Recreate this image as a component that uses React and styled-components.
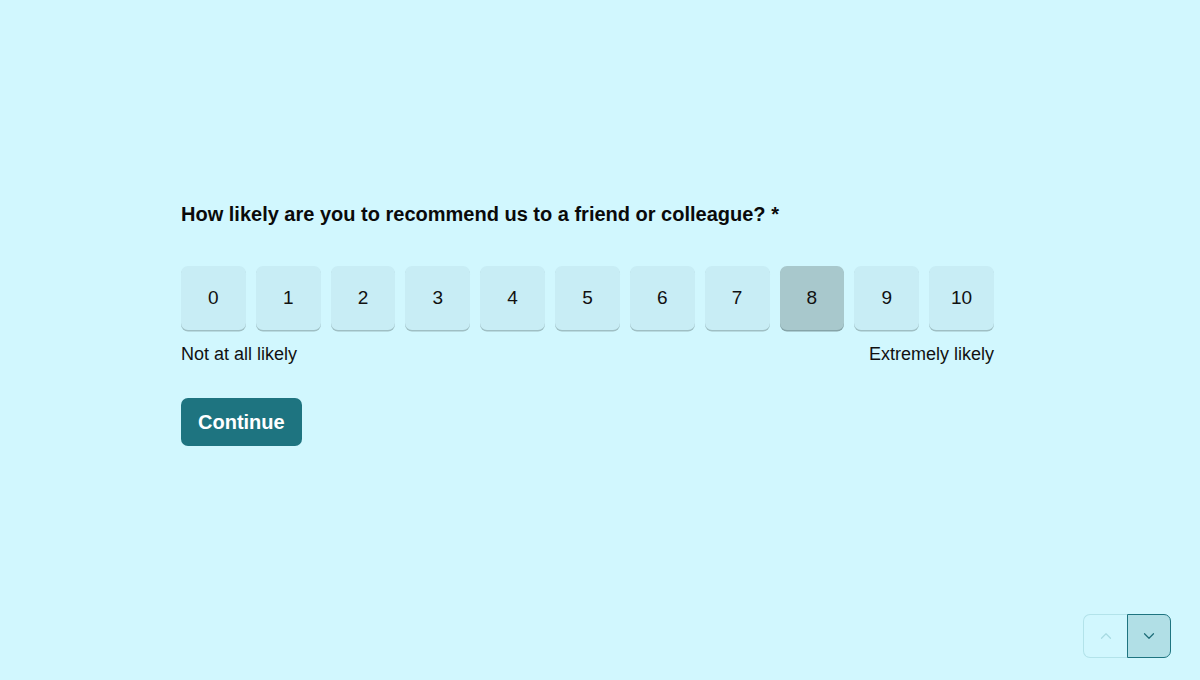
import styled, { createGlobalStyle } from "styled-components";

const GlobalStyle = createGlobalStyle`
  html, body {
    margin: 0;
    padding: 0;
    background: #d1f7fe;
    font-family: "Liberation Sans", Arial, sans-serif;
    color: #111;
  }
`;

const scores = [0, 1, 2, 3, 4, 5, 6, 7, 8, 9, 10];

const App = () => {
  return (
    <Page>
      <GlobalStyle />
      <Question>
        <Title>How likely are you to recommend us to a friend or colleague? *</Title>
        <Scale>
          {scores.map((n) => (
            <Score key={n} $selected={n === 8}>
              {n}
            </Score>
          ))}
        </Scale>
        <Labels>
          <span>Not at all likely</span>
          <span>Extremely likely</span>
        </Labels>
        <Continue>Continue</Continue>
      </Question>
      <Nav>
        <NavButton $side="up" disabled>
          <svg width="18" height="18" viewBox="0 0 24 24" fill="none" stroke="currentColor" strokeWidth="1.6" strokeLinecap="round" strokeLinejoin="round">
            <path d="m18 15-6-6-6 6" />
          </svg>
        </NavButton>
        <NavButton $side="down">
          <svg width="18" height="18" viewBox="0 0 24 24" fill="none" stroke="currentColor" strokeWidth="1.6" strokeLinecap="round" strokeLinejoin="round">
            <path d="m6 9 6 6 6-6" />
          </svg>
        </NavButton>
      </Nav>
    </Page>
  );
};

export default App;

const Page = styled.div`
  position: relative;
  width: 1200px;
  height: 680px;
  overflow: hidden;
  box-sizing: border-box;
  padding-top: 202px;
`;

const Question = styled.div`
  width: 838px;
  margin: 0 auto;
  display: flex;
  flex-direction: column;
`;

const Title = styled.h1`
  margin: 0;
  font-size: 20px;
  font-weight: 700;
  line-height: 24px;
  color: #0a0a0a;
`;

const Scale = styled.div`
  display: flex;
  gap: 10px;
  width: 813px;
  margin-top: 40px;
`;

const Score = styled.button`
  flex: 1;
  height: 64px;
  border: none;
  border-radius: 7px;
  background: ${({ $selected }) => ($selected ? "#a8c8cc" : "#c8edf5")};
  box-shadow: 0 1.5px 0 ${({ $selected }) => ($selected ? "#86a4a8" : "#9fbfc4")};
  font-family: "Liberation Sans", Arial, sans-serif;
  font-size: 19px;
  color: #111;
  cursor: pointer;
  padding: 0;
`;

const Labels = styled.div`
  display: flex;
  justify-content: space-between;
  width: 813px;
  margin-top: 14px;
  font-size: 18px;
  line-height: 20px;
  color: #111;
`;

const Continue = styled.button`
  align-self: flex-start;
  margin-top: 34px;
  height: 48px;
  padding: 0 17px;
  border: none;
  border-radius: 7px;
  background: #1e7480;
  color: #fff;
  font-family: "Liberation Sans", Arial, sans-serif;
  font-size: 20px;
  font-weight: 700;
  cursor: pointer;
`;

const Nav = styled.div`
  position: absolute;
  right: 29px;
  bottom: 22px;
  display: flex;
`;

const NavButton = styled.button`
  width: 44px;
  height: 44px;
  display: flex;
  align-items: center;
  justify-content: center;
  padding: 0;
  box-sizing: border-box;
  cursor: pointer;
  border: 1px solid ${({ $side }) => ($side === "up" ? "#b3e3ea" : "#1e7480")};
  background: ${({ $side }) => ($side === "up" ? "transparent" : "#b1dfe6")};
  color: ${({ $side }) => ($side === "up" ? "#a8dbe2" : "#1e6d78")};
  border-radius: ${({ $side }) => ($side === "up" ? "7px 0 0 7px" : "0 7px 7px 0")};
  ${({ $side }) => ($side === "up" ? "border-right: none;" : "")}
`;
